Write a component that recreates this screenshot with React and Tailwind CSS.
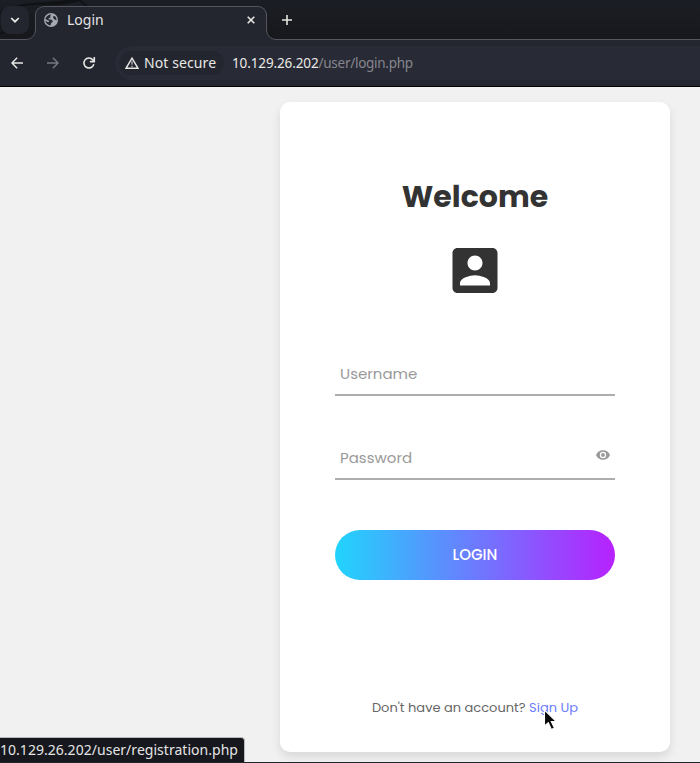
const uiFont = "font-['Noto_Sans',sans-serif]";

function BrowserTab() {
  return (
    <div className="relative z-10 mt-[6px] ml-[6px] flex h-[34px] w-[232px] items-center rounded-t-[9px] border border-b-0 border-[#555760] bg-[#23252f] pl-[8px]">
      <svg className="absolute -left-[11px] bottom-0" width="11" height="11" viewBox="0 0 11 11">
        <path d="M11 0H10.5C10.5 6.5 6.5 10.5 0 10.5V11H11Z" fill="#23252f" />
        <path d="M10.5 0C10.5 6.5 6.5 10.5 0 10.5" fill="none" stroke="#555760" />
      </svg>
      <svg className="absolute -right-[11px] bottom-0" width="11" height="11" viewBox="0 0 11 11">
        <path d="M0 0H.5C.5 6.5 4.5 10.5 11 10.5V11H0Z" fill="#23252f" />
        <path d="M.5 0C.5 6.5 4.5 10.5 11 10.5" fill="none" stroke="#555760" />
      </svg>
      <svg width="14" height="14" viewBox="0 0 14 14" className="-mt-[7px]">
        <circle cx="7" cy="7" r="7" fill="#a4a8b1" />
        <path d="M7.6 1.5 6.2 2.8 6.5 4.4 4.7 5.2 4.6 6.5H7.4L8.6 7.7V9.1L7.1 10 6.5 12.5C4 12.3 1.7 10.4 1.4 7.7L4 9.3 5.3 8.7 4.5 7.4 1.5 6.3C1.7 3.6 4.3 1.3 7.6 1.5ZM9 3.4 10.6 3.1C12 4.2 12.6 5.6 12.5 7.2L10.6 6.5 9.3 5.2Z" fill="#272a34" />
      </svg>
      <span className="-mt-[7px] ml-[9px] text-[14px] leading-[20px] text-[#e3e3e3]">Login</span>
      <svg className="-mt-[7px] mr-[11px] ml-auto" width="8" height="8" viewBox="0 0 8 8">
        <path d="M.7.7 7.3 7.3M7.3.7.7 7.3" stroke="#e8e8e3" strokeWidth="1.6" />
      </svg>
    </div>
  );
}

function Chrome() {
  return (
    <header className={`h-[87px] shrink-0 border-b border-black bg-[#23252f] ${uiFont}`}>
      <div className="relative flex h-[40px] border-b border-[#555760] bg-linear-to-b from-[#1b1e24] to-[#17181c]">
        <svg className="absolute top-0 left-0" width="120" height="40" viewBox="0 0 120 40">
          <path d="M0 13C20 1 44 5 75 0M37 4C55 5 66 4 79 0l8 6M0 34C8 29 14 27 25 25" stroke="#101216" strokeWidth="2" fill="none" />
        </svg>
        <div className="relative mt-[6px] ml-px flex h-[28px] w-[28px] items-center justify-center rounded-[9px] bg-[#23252f]">
          <svg width="10" height="6" viewBox="0 0 10 6"><path d="m1.2 1 3.8 3.7L8.8 1" fill="none" stroke="#eeeeea" strokeWidth="1.7" /></svg>
        </div>
        <BrowserTab />
        <svg className="mt-[15px] ml-[15px]" width="10" height="10" viewBox="0 0 10 10">
          <path d="M5 0v10M0 5h10" stroke="#e5e5df" strokeWidth="1.6" />
        </svg>
      </div>
      <div className="flex h-[46px] items-center">
        <svg className="ml-[11px]" width="12" height="12" viewBox="0 0 12 12"><path d="M12 6H1.2M6.1.8 1 6l5.1 5.2" fill="none" stroke="#e7e7e3" strokeWidth="1.5" /></svg>
        <svg className="ml-[24px]" width="12" height="12" viewBox="0 0 12 12"><path d="M0 6h10.8M5.9.8 11 6l-5.1 5.2" fill="none" stroke="#777881" strokeWidth="1.5" /></svg>
        <svg className="ml-[23px]" width="14" height="14" viewBox="0 0 14 14"><path d="M11.8 8.1A5 5 0 1 1 10.8 3.8L12.3 5.2M12.3 1v4.6H7.9" fill="none" stroke="#e7e7e3" strokeWidth="1.6" /></svg>
        <div className="ml-[19px] flex h-[34px] flex-1 items-center rounded-l-full bg-[#282a36] pl-[4px]">
          <div className="flex h-[24px] w-[105px] items-center rounded-full bg-[#23252f] pl-[6px]">
            <svg width="14" height="12" viewBox="0 0 14 12">
              <path d="M7 1.2 13 11.3H1Z" fill="none" stroke="#e7e7e3" strokeWidth="1.4" />
              <path d="M7 4.3v3.4M7 8.7V10" stroke="#b8b9bc" strokeWidth="1.3" />
            </svg>
            <span className="ml-[5px] text-[14px] leading-[20px] tracking-[0.1px] whitespace-nowrap text-[#e9e9e5]">Not secure</span>
          </div>
          <span className="ml-[8px] text-[13.5px] leading-[20px] tracking-[-0.12px] whitespace-nowrap text-[#e9e9e5]">10.129.26.202<span className="tracking-[-0.27px] text-[#85868d]">/user/login.php</span></span>
        </div>
      </div>
    </header>
  );
}

function EyeIcon() {
  return (
    <svg width="14" height="10" viewBox="1 4.5 22 15">
      <path fill="#999" d="M12 4.5C7 4.5 2.73 7.61 1 12c1.73 4.39 6 7.5 11 7.5s9.27-3.11 11-7.5c-1.73-4.39-6-7.5-11-7.5zM12 17a5 5 0 1 1 0-10 5 5 0 0 1 0 10zm0-8a3 3 0 1 0 0 6 3 3 0 0 0 0-6z" />
    </svg>
  );
}

export default function App() {
  return (
    <div className="flex h-[763px] w-[700px] flex-col overflow-hidden bg-[#f1f1f1] font-['Poppins','Inter',sans-serif]">
      <Chrome />
      <main className="relative min-h-0 flex-1 overflow-hidden border-b border-[#23252f] pt-[15px]">
        <section className="ml-[280px] flex h-[650px] w-[390px] flex-col items-center rounded-[10px] bg-white shadow-[0_5px_10px_rgba(0,0,0,0.1)]">
          <h1 className="mt-[77px] text-[30px] leading-[36px] font-bold text-[#333]">Welcome</h1>
          <svg className="mt-[25px] shrink-0" width="60" height="60" viewBox="0 -0.2 24 24">
            <path fill="#333" d="M3 5v14c0 1.1.89 2 2 2h14c1.1 0 2-.9 2-2V5c0-1.1-.9-2-2-2H5c-1.11 0-2 .9-2 2zm12 4c0 1.66-1.34 3-3 3s-3-1.34-3-3 1.34-3 3-3 3 1.34 3 3zm-9 8c0-2 4-3.1 6-3.1s6 1.1 6 3.1v1H6v-1z" />
          </svg>
          <div className="mt-[47px] flex h-[49px] w-[280px] shrink-0 items-center border-b-2 border-[#adadad] px-[5px] pt-[7px] text-[15px] text-[#999]">Username</div>
          <div className="mt-[35px] flex h-[49px] w-[280px] shrink-0 items-center justify-between border-b-2 border-[#adadad] px-[5px] pt-[7px] text-[15px] text-[#999]">
            <span>Password</span>
            <span className="-mt-[6px]"><EyeIcon /></span>
          </div>
          <button className="mt-[50px] h-[50px] w-[280px] shrink-0 rounded-full bg-linear-to-r/srgb from-[#21d4fd] to-[#b721ff] text-[15px] font-medium text-white">LOGIN</button>
          <p className="mt-[118px] text-[13px] leading-[20px] whitespace-nowrap text-[#666]">Don't have an account? <span className="text-[#6a7dfe]">Sign Up</span></p>
        </section>
        <div className={`absolute bottom-0 left-0 flex h-[25px] w-[245px] items-center rounded-tr-[4px] border-t border-r border-[#b9babd] bg-[#17181d] pb-[2px] text-[14px] tracking-[0.03px] whitespace-nowrap text-[#e5e5e5] ${uiFont}`}>10.129.26.202/user/registration.php</div>
        <svg className="absolute top-[622px] left-[543px]" width="16" height="23" viewBox="0 0 16 23">
          <path d="M1.5 1v16l3.8-3.3 3.1 6.8 3-1.4-3.1-6.5h5Z" fill="#080808" stroke="white" strokeWidth="1.1" />
        </svg>
      </main>
    </div>
  );
}
